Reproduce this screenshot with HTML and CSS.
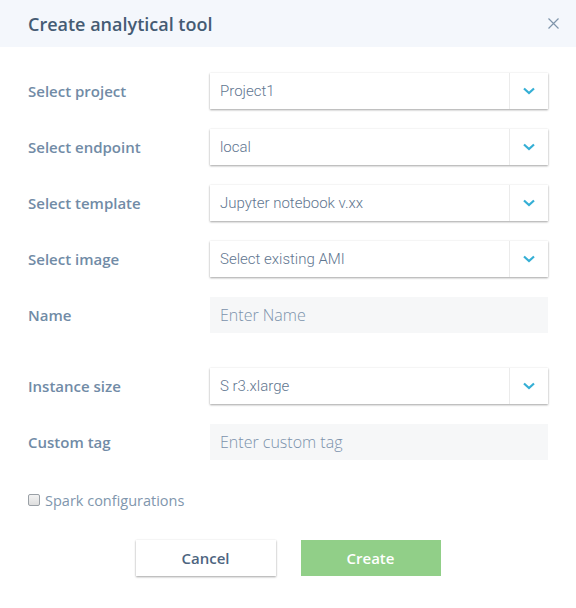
FILE: index.html
```html
<!DOCTYPE html>
<html>
<head>
<meta charset="utf-8">
<link rel="stylesheet" href="styles.css">
</head>
<body>
<div class="dialog">
  <div class="header">
    <h1 class="title">Create analytical tool</h1>
    <span class="close"><svg width="11" height="11" viewBox="0 0 11 11"><path d="M0.5 0.5L10.5 10.5M10.5 0.5L0.5 10.5" stroke="#7f95ab" stroke-width="1.2" fill="none"/></svg></span>
  </div>
  <div class="form">
    <div class="row">
      <label class="label">Select project</label>
      <div class="select"><span class="value">Project1</span><span class="caret"><svg width="12" height="8" viewBox="0 0 12 8"><path d="M1 1.5L6 6L11 1.5" stroke="#35afd5" stroke-width="2.2" fill="none"/></svg></span></div>
    </div>
    <div class="row">
      <label class="label">Select endpoint</label>
      <div class="select"><span class="value">local</span><span class="caret"><svg width="12" height="8" viewBox="0 0 12 8"><path d="M1 1.5L6 6L11 1.5" stroke="#35afd5" stroke-width="2.2" fill="none"/></svg></span></div>
    </div>
    <div class="row">
      <label class="label">Select template</label>
      <div class="select"><span class="value">Jupyter notebook v.xx</span><span class="caret"><svg width="12" height="8" viewBox="0 0 12 8"><path d="M1 1.5L6 6L11 1.5" stroke="#35afd5" stroke-width="2.2" fill="none"/></svg></span></div>
    </div>
    <div class="row">
      <label class="label">Select image</label>
      <div class="select"><span class="value">Select existing AMI</span><span class="caret"><svg width="12" height="8" viewBox="0 0 12 8"><path d="M1 1.5L6 6L11 1.5" stroke="#35afd5" stroke-width="2.2" fill="none"/></svg></span></div>
    </div>
    <div class="row">
      <label class="label">Name</label>
      <div class="input"><span class="placeholder">Enter Name</span></div>
    </div>
    <div class="row spaced">
      <label class="label">Instance size</label>
      <div class="select"><span class="value">S r3.xlarge</span><span class="caret"><svg width="12" height="8" viewBox="0 0 12 8"><path d="M1 1.5L6 6L11 1.5" stroke="#35afd5" stroke-width="2.2" fill="none"/></svg></span></div>
    </div>
    <div class="row">
      <label class="label">Custom tag</label>
      <div class="input"><span class="placeholder">Enter custom tag</span></div>
    </div>
    <div class="check-row">
      <span class="checkbox"></span>
      <span class="check-label">Spark configurations</span>
    </div>
    <div class="actions">
      <button class="btn cancel">Cancel</button>
      <button class="btn create">Create</button>
    </div>
  </div>
</div>
</body>
</html>
```

FILE: styles.css
```css
html, body {
  margin: 0;
  padding: 0;
  background: #ffffff;
}
.dialog {
  width: 576px;
  height: 608px;
  font-family: "Open Sans", sans-serif;
}
.header {
  height: 47px;
  background: #f4f7fc;
  display: flex;
  align-items: center;
  justify-content: space-between;
  padding: 0 17px 0 28px;
}
.title {
  margin: 0;
  font-size: 18px;
  font-weight: 600;
  color: #455b73;
  letter-spacing: 0;
}
.close {
  display: flex;
  margin-top: -1px;
}
.form {
  padding: 26px 28px 0 28px;
  display: flex;
  flex-direction: column;
  gap: 20px;
}
.row {
  display: flex;
  align-items: center;
  height: 36px;
}
.row.spaced {
  margin-top: 15px;
}
.label {
  width: 182px;
  font-size: 15px;
  font-weight: 600;
  color: #718ba6;
}
.select {
  width: 338px;
  height: 36px;
  display: flex;
  background: #fff;
  box-shadow: 0 1px 2px rgba(0,0,0,0.35), 0 0 2px rgba(0,0,0,0.06);
}
.value {
  flex: 1;
  display: flex;
  align-items: center;
  padding-left: 10px;
  font-family: Roboto, sans-serif;
  font-weight: 300;
  font-size: 15px;
  color: #5f7690;
}
.caret {
  width: 38px;
  border-left: 1px solid #ebebeb;
  display: flex;
  align-items: center;
  justify-content: center;
}
.input {
  width: 338px;
  height: 36px;
  background: #f6f7f8;
  display: flex;
  align-items: center;
  padding-left: 10px;
  box-sizing: border-box;
}
.placeholder {
  font-size: 16px;
  font-weight: 300;
  color: #7b92ab;
}
.check-row {
  display: flex;
  align-items: center;
  gap: 5px;
  margin-top: 11px;
  height: 18px;
}
.checkbox {
  width: 10px;
  height: 10px;
  border: 1px solid #9aa0a6;
  border-radius: 2px;
  background: linear-gradient(#f3f3f3, #dedede);
}
.check-label {
  font-size: 14.5px;
  font-weight: 400;
  color: #8096ad;
}
.actions {
  display: flex;
  justify-content: center;
  gap: 25px;
  margin-top: 11px;
}
.btn {
  width: 140px;
  height: 36px;
  border: none;
  font-family: "Open Sans", sans-serif;
  font-size: 15px;
  font-weight: 600;
  cursor: pointer;
}
.cancel {
  background: #fff;
  color: #4e6580;
  box-shadow: 0 1px 2px rgba(0,0,0,0.35), 0 0 2px rgba(0,0,0,0.06);
}
.create {
  background: #91cf88;
  color: #fff;
}
```
